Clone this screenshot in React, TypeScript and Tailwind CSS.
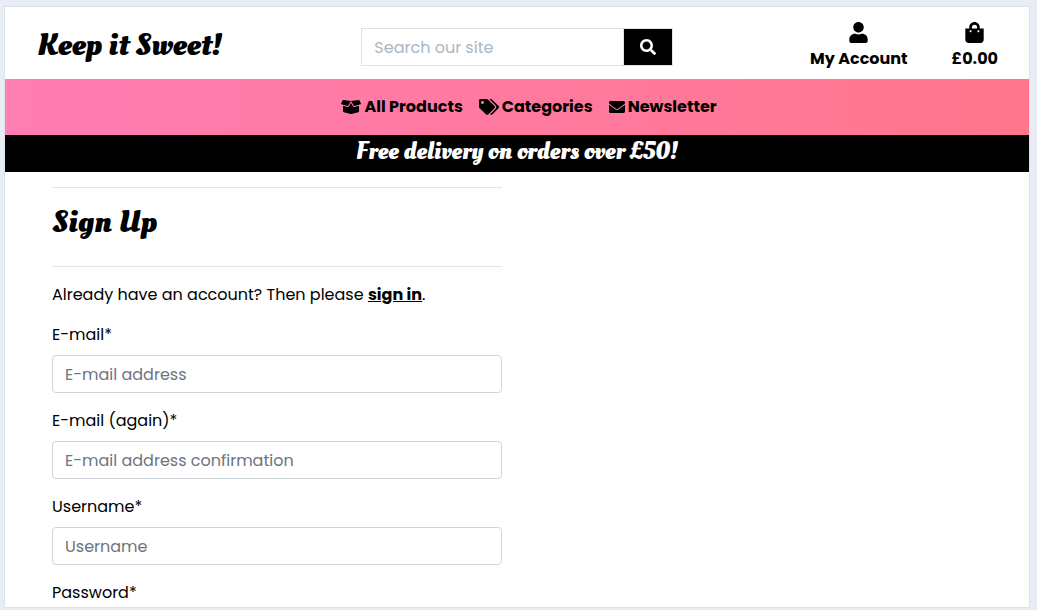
import type { ReactNode } from "react";
import {
  FaBoxOpen,
  FaEnvelope,
  FaSearch,
  FaShoppingBag,
  FaTags,
  FaUser,
} from "react-icons/fa";

const displayFont = "font-['Oleo_Script','Liberation_Serif',serif] font-bold";

function NavLink({ icon, label }: { icon: ReactNode; label: string }) {
  return (
    <a href="#" className="flex items-center gap-[3px] font-bold text-black">
      {icon}
      {label}
    </a>
  );
}

function HeaderLink({ icon, label }: { icon: ReactNode; label: string }) {
  return (
    <a href="#" className="flex flex-col items-center gap-1 font-bold text-black">
      {icon}
      <span className="leading-6">{label}</span>
    </a>
  );
}

interface FieldProps {
  id: string;
  label: string;
  type?: string;
  placeholder: string;
}

function Field({ id, label, type = "text", placeholder }: FieldProps) {
  return (
    <div className="mb-4">
      <label htmlFor={id} className="mb-2 block">
        {label}
      </label>
      <input
        id={id}
        type={type}
        placeholder={placeholder}
        className="block h-[38px] w-full rounded border border-[#ced4da] bg-white px-3 placeholder:text-[#6c757d]"
      />
    </div>
  );
}

export default function App() {
  return (
    <div className="flex min-h-screen bg-[#e8edf5] pt-[6px] pr-[7px] pb-[2px] pl-1 font-['Poppins','Inter',sans-serif] text-base leading-6 text-black">
      <div className="flex flex-1 flex-col border border-[#dee2e6] bg-white">
        <header className="grid h-[72px] grid-cols-3 items-center">
          <a href="#" className={`${displayFont} pt-1 pl-8 text-[32px] leading-9 whitespace-nowrap`}>
            Keep it Sweet!
          </a>
          <form className="mx-[15px] mt-2 flex h-[38px] border border-[#dee2e6]">
            <input
              type="search"
              aria-label="Search our site"
              placeholder="Search our site"
              className="min-w-0 flex-1 border-r border-[#dee2e6] px-3 pt-px placeholder:text-[#aab7c4]"
            />
            <button type="submit" aria-label="Search" className="flex w-12 items-center justify-center bg-black text-white">
              <FaSearch size={16} />
            </button>
          </form>
          <div className="flex justify-end gap-11 pt-[6px] pr-[31px]">
            <HeaderLink icon={<FaUser size={21} />} label="My Account" />
            <HeaderLink icon={<FaShoppingBag size={21} />} label="£0.00" />
          </div>
        </header>

        <nav className="flex h-14 items-center justify-center gap-4 bg-linear-to-r from-[#ff7eb3] to-[#ff758c] pl-6">
          <NavLink icon={<FaBoxOpen size={20} />} label="All Products" />
          <NavLink icon={<FaTags size={20} />} label="Categories" />
          <NavLink icon={<FaEnvelope size={16} />} label="Newsletter" />
        </nav>

        <p className={`${displayFont} bg-black pt-[2px] pb-[5px] text-center text-2xl leading-[30px] text-white`}>
          Free delivery on orders over £50!
        </p>

        <main className="pt-[15px] pr-4 pl-[47px]">
          <div className="max-w-[450px]">
            <hr className="border-[#e5e5e5]" />
            <h1 className={`${displayFont} mt-4 mb-[26px] text-[32px] leading-9`}>Sign Up</h1>
            <hr className="mb-4 border-[#e5e5e5]" />
            <p className="mb-4">
              Already have an account? Then please{" "}
              <a href="#" className="font-bold underline">
                sign in
              </a>
              .
            </p>
            <form>
              <Field id="email" label="E-mail*" type="email" placeholder="E-mail address" />
              <Field id="email2" label="E-mail (again)*" type="email" placeholder="E-mail address confirmation" />
              <Field id="username" label="Username*" placeholder="Username" />
              <div className="relative">
                <label htmlFor="password" className="block">
                  Password*
                </label>
                <input id="password" type="password" className="sr-only bottom-0" />
              </div>
            </form>
          </div>
        </main>
      </div>
    </div>
  );
}
